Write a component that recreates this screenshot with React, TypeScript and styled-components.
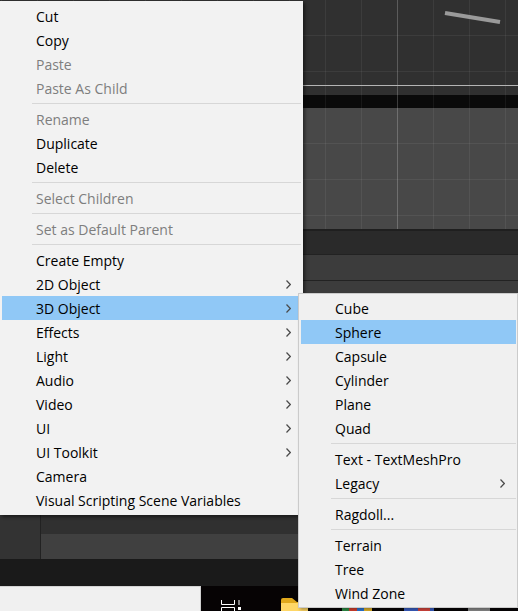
import React from "react";
import styled, { createGlobalStyle } from "styled-components";

const GlobalStyle = createGlobalStyle`
  html, body {
    margin: 0;
    padding: 0;
    background: #000;
    overflow: hidden;
  }
`;

const Page = styled.div`
  position: relative;
  width: 518px;
  height: 611px;
  overflow: hidden;
  font-family: "Open Sans", "Noto Sans", sans-serif;
`;

const Backdrop = styled.div`
  display: flex;
  flex-direction: column;
  height: 100%;
`;

// Scene view strips: the vertical grid only depends on x, so each strip can carry its own copy
const SceneBand = styled.div<{ $h: number; $bg: string; $rows?: boolean }>`
  height: ${({ $h }) => $h}px;
  background-color: ${({ $bg }) => $bg};
  background-image: linear-gradient(90deg, rgba(255, 255, 255, 0.16) 1px, transparent 1px),
    linear-gradient(90deg, rgba(255, 255, 255, 0.06) 1px, transparent 1px)
    ${({ $rows }) =>
      $rows ? ", linear-gradient(180deg, rgba(255, 255, 255, 0.06) 1px, transparent 1px)" : ""};
  background-size: 518px 100%, 36px 100%${({ $rows }) => ($rows ? ", 100% 36px" : "")};
  background-position: 397px 0, 325px 0${({ $rows }) => ($rows ? ", 0 35px" : "")};
  background-repeat: no-repeat, repeat${({ $rows }) => ($rows ? ", repeat" : "")};
`;

const Band = styled.div<{ $h: number; $bg: string }>`
  height: ${({ $h }) => $h}px;
  background: ${({ $bg }) => $bg};
`;

const LowerPanels = styled.div`
  display: flex;
  height: 44px;
  background: #222;
`;

const LeftPane = styled.div`
  width: 40px;
  margin-right: 1px;
  background: #333;
`;

const RightPane = styled.div`
  flex: 1;
  display: flex;
  flex-direction: column;
`;

const BottomRow = styled.div`
  display: flex;
  flex: 1;
  min-height: 0;
`;

const WindowCorner = styled.div`
  width: 200px;
  background: #f0f0f0;
  border-top: 1px solid #d4d4d4;
`;

const Desktop = styled.div`
  flex: 1;
  display: flex;
  align-items: flex-start;
  gap: 34px;
  padding: 12px 0 0 20px;
  background: #060304;
  border-left: 1px solid #cfcfcf;
  overflow: hidden;
`;

const TrayIcon = styled.svg<{ $mt?: number }>`
  flex: none;
  margin-top: ${({ $mt }) => $mt || 0}px;
`;

const ColorChip = styled.div<{ $w: number; $fill: string; $ml?: number }>`
  flex: none;
  width: ${({ $w }) => $w}px;
  height: 4px;
  margin-top: 9px;
  margin-left: ${({ $ml }) => $ml || 0}px;
  background: ${({ $fill }) => $fill};
`;

const GizmoLine = styled.svg`
  position: absolute;
  left: 440px;
  top: 8px;
`;

const Menu = styled.div`
  position: absolute;
  left: 0;
  top: 1px;
  width: 303px;
  box-sizing: border-box;
  padding: 3px 2px;
  background: #f2f2f2;
  box-shadow: 2px 2px 3px rgba(0, 0, 0, 0.45);
`;

const SubMenu = styled.div`
  position: absolute;
  left: 298px;
  top: 293px;
  width: 220px;
  box-sizing: border-box;
  padding: 2px 1px 2px 2px;
  background: #f0f0f0;
  border: 1px solid #cbcbcb;
  box-shadow: 2px 2px 3px rgba(0, 0, 0, 0.3);
`;

const Row = styled.div<{ $disabled?: boolean; $active?: boolean; $pr: number }>`
  display: flex;
  align-items: center;
  justify-content: space-between;
  height: 24px;
  padding: 0 ${({ $pr }) => $pr}px 0 34px;
  font-size: 14px;
  white-space: nowrap;
  color: ${({ $disabled }) => ($disabled ? "#7e7e7e" : "#000")};
  background: ${({ $active }) => ($active ? "#90c8f6" : "transparent")};
`;

const Separator = styled.div`
  height: 1px;
  margin: 3px 0 3px 30px;
  background: #d7d7d7;
`;

const Arrow = () => (
  <svg width="5" height="9" viewBox="0 0 5 9" fill="none">
    <path d="M0.5 0.5 L4.3 4.5 L0.5 8.5" stroke="#4a4a4a" strokeWidth="1.2" />
  </svg>
);

type Item =
  | { sep: true }
  | { label: string; disabled?: boolean; active?: boolean; more?: boolean };

const mainItems: Item[] = [
  { label: "Cut" },
  { label: "Copy" },
  { label: "Paste", disabled: true },
  { label: "Paste As Child", disabled: true },
  { sep: true },
  { label: "Rename", disabled: true },
  { label: "Duplicate" },
  { label: "Delete" },
  { sep: true },
  { label: "Select Children", disabled: true },
  { sep: true },
  { label: "Set as Default Parent", disabled: true },
  { sep: true },
  { label: "Create Empty" },
  { label: "2D Object", more: true },
  { label: "3D Object", more: true, active: true },
  { label: "Effects", more: true },
  { label: "Light", more: true },
  { label: "Audio", more: true },
  { label: "Video", more: true },
  { label: "UI", more: true },
  { label: "UI Toolkit", more: true },
  { label: "Camera" },
  { label: "Visual Scripting Scene Variables" },
];

const subItems: Item[] = [
  { label: "Cube" },
  { label: "Sphere", active: true },
  { label: "Capsule" },
  { label: "Cylinder" },
  { label: "Plane" },
  { label: "Quad" },
  { sep: true },
  { label: "Text - TextMeshPro" },
  { label: "Legacy", more: true },
  { sep: true },
  { label: "Ragdoll..." },
  { sep: true },
  { label: "Terrain" },
  { label: "Tree" },
  { label: "Wind Zone" },
];

const renderItems = (items: Item[], arrowPad: number) =>
  items.map((item, i) =>
    "sep" in item ? (
      <Separator key={i} />
    ) : (
      <Row key={i} $disabled={item.disabled} $active={item.active} $pr={arrowPad}>
        {item.label}
        {item.more && <Arrow />}
      </Row>
    )
  );

export default function App() {
  return (
    <Page>
      <GlobalStyle />
      <Backdrop>
        <SceneBand $h={85} $bg="#303030" $rows />
        <Band $h={1} $bg="#b4b4b4" />
        <SceneBand $h={9} $bg="#303030" />
        <SceneBand $h={13} $bg="#0a0a0a" />
        <SceneBand $h={121} $bg="#484848" $rows />
        <Band $h={2} $bg="#1f1f1f" />
        <Band $h={23} $bg="#2a2a2a" />
        <Band $h={1} $bg="#222" />
        <Band $h={25} $bg="#3c3c3c" />
        <Band $h={1} $bg="#222" />
        <Band $h={234} $bg="#3c3c3c" />
        <LowerPanels>
          <LeftPane />
          <RightPane>
            <Band $h={19} $bg="#303030" />
            <Band $h={25} $bg="#404040" />
          </RightPane>
        </LowerPanels>
        <Band $h={27} $bg="#1a1a1a" />
        <BottomRow>
          <WindowCorner />
          <Desktop>
            <TrayIcon $mt={2} width="26" height="14" viewBox="0 0 26 14" fill="none">
              <path d="M0.5 0 V4.5 H13.5 V0 M0.5 14 V7.5 H13.5 V14" stroke="#fff" />
              <path d="M18 0 V5" stroke="#fff" />
              <rect x="17" y="7" width="3" height="3" fill="#fff" />
            </TrayIcon>
            <TrayIcon width="27" height="16" viewBox="0 0 27 16">
              <path d="M0 2 Q0 0 2 0 H11 L16 4 H27 V16 H0 Z" fill="#e0a81c" />
              <path d="M0 5 H16 L20 4 H27 V16 H0 Z" fill="#ffd766" />
            </TrayIcon>
            <ColorChip $w={30} $fill="linear-gradient(90deg, #2f8f46 0 25%, #d8412f 25% 50%, #2b78d8 50% 75%, #e5b52a 75%)" />
            <ColorChip $w={30} $ml={-2} $fill="linear-gradient(90deg, #3a5fc4 0 45%, #d9473f 45% 85%, #3a5fc4 85%)" />
            <ColorChip $w={22} $fill="#8a8a8a" />
          </Desktop>
        </BottomRow>
      </Backdrop>

      <GizmoLine width="64" height="20" viewBox="0 0 64 20">
        <path d="M5 5 L60 14" stroke="#9a9a9a" strokeWidth="4" />
      </GizmoLine>

      <Menu>{renderItems(mainItems, 10)}</Menu>
      <SubMenu>{renderItems(subItems, 11)}</SubMenu>
    </Page>
  );
}
